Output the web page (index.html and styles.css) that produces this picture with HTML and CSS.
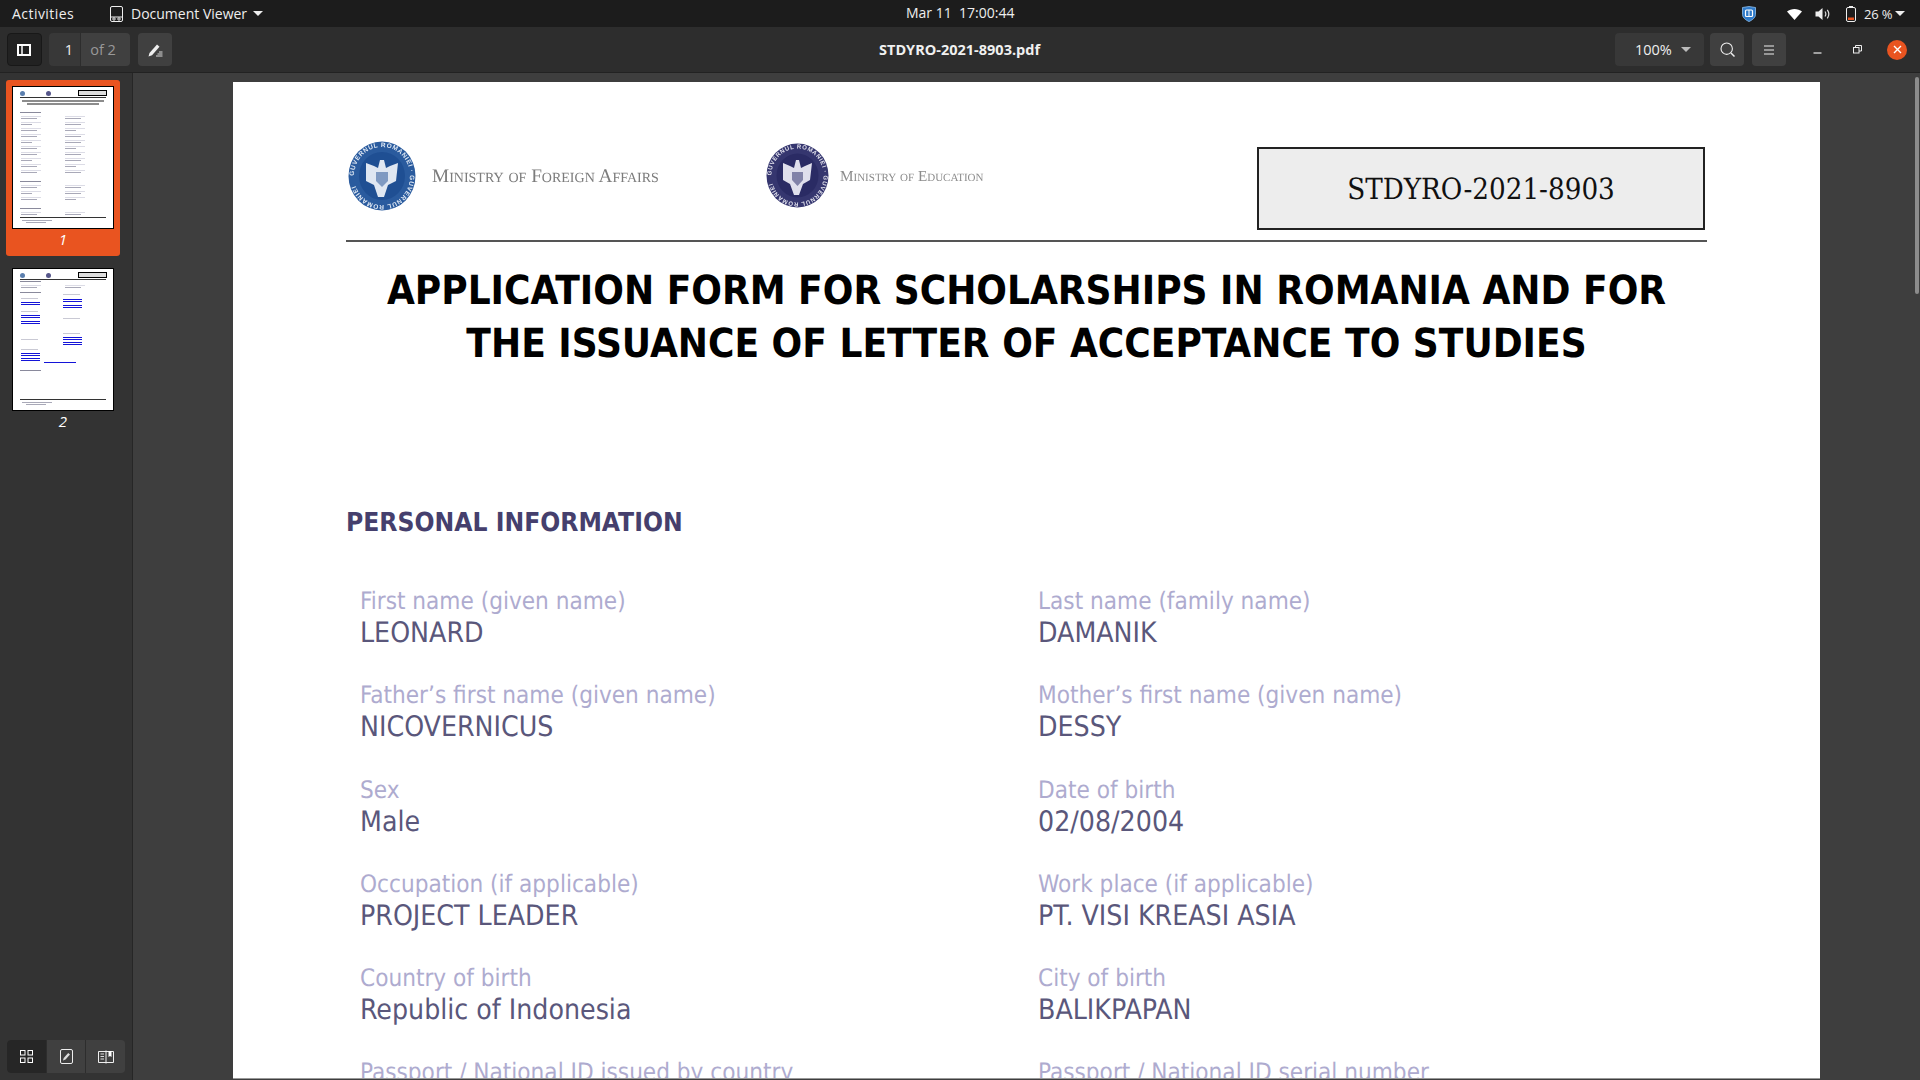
FILE: index.html
```html
<!DOCTYPE html>
<html lang="en">
<head>
    <meta charset="UTF-8">
    <title>STDYRO-2021-8903.pdf</title>
    <link rel="stylesheet" href="styles.css">
</head>
<body>

    <!-- Top Bar -->
    <header class="topbar">
        <div class="topbar-left">
            <span class="activities">Activities</span>
            <span class="app-menu">
                <svg class="app-icon" width="13" height="16" viewBox="0 0 13 16" fill="none" stroke="#eee" stroke-width="1"><rect x="0.500" y="0.500" width="12" height="15" rx="1.500"/><path d="M0.500 11h12"/><circle cx="4" cy="13" r="1.200"/><circle cx="9" cy="13" r="1.200"/></svg>
                <span>Document Viewer</span>
                <span class="caret"></span>
            </span>
        </div>
        <div class="clock">Mar 11&nbsp; 17:00:44</div>
        <div class="topbar-right">
            <svg class="tray-shield" width="14" height="16" viewBox="0 0 14 16"><path d="M0.500 1.500L7 0.500l6.500 1v7c0 3-3 5.500-6.500 7-3.500-1.500-6.500-4-6.500-7z" fill="#2f7ac9" stroke="#8fc0ee" stroke-width="0.800"/><rect x="3.500" y="4" width="7" height="6.500" rx="1" fill="none" stroke="#fff" stroke-width="1.200"/><path d="M7 4v6.500" stroke="#fff" stroke-width="1"/></svg>
            <svg class="tray-wifi" width="15" height="12" viewBox="0 0 15 12"><path d="M0 3.500C4 0 11 0 15 3.500L7.500 12z" fill="#fff"/></svg>
            <svg class="tray-sound" width="15" height="14" viewBox="0 0 15 14"><path d="M0.500 4.500h3L7.500 1v12L3.500 9.500h-3z" fill="#eee"/><path d="M10 4.500c1 1.500 1 3.500 0 5M12.300 2.800c1.800 2.500 1.800 6 0 8.500" fill="none" stroke="#ddd" stroke-width="1.200"/></svg>
            <svg class="tray-battery" width="10" height="16" viewBox="0 0 10 16"><rect x="0.500" y="1.500" width="9" height="14" rx="1.500" fill="none" stroke="#eee"/><rect x="3" y="0" width="4" height="2" fill="#eee"/><rect x="2" y="11.500" width="6" height="2.500" fill="#e95420"/></svg>
            <span class="battery-text">26 %</span>
            <span class="caret"></span>
        </div>
    </header>

    <!-- Header Bar -->
    <div class="headerbar">
        <div class="hb-left">
            <button class="hb-btn is-dark">
                <svg width="14" height="12" viewBox="0 0 14 12" fill="none" stroke="#fff" stroke-width="2"><rect x="1" y="1" width="12" height="10"/><path d="M5 1v10" stroke-width="1.500"/></svg>
            </button>
            <div class="page-entry">
                <span class="page-num">1</span>
                <span class="page-of">of 2</span>
            </div>
            <button class="hb-btn">
                <svg width="15" height="14" viewBox="0 0 15 14"><path d="M0.500 13.500l1-3.500 7.500-8.500 2.500 2.200-7.500 8.500z" fill="#eee"/><path d="M8 13h6.500M9.500 11h5M11 9h3.500" stroke="#eee" stroke-width="0.900"/></svg>
            </button>
        </div>
        <div class="doc-title">STDYRO-2021-8903.pdf</div>
        <div class="hb-right">
            <div class="zoom-select">100% <span class="caret caret-dim"></span></div>
            <button class="hb-btn">
                <svg width="15" height="15" viewBox="0 0 15 15" fill="none" stroke="#eee" stroke-width="1.100"><circle cx="6.700" cy="6.700" r="5.700"/><path d="M11 11l3.500 3.500" stroke-width="1.500"/></svg>
            </button>
            <button class="hb-btn">
                <svg width="12" height="10" viewBox="0 0 12 10" stroke="#eee" stroke-width="1"><path d="M1 1h10M1 5h10M1 9h10"/></svg>
            </button>
            <div class="window-btns">
                <span class="win-btn"><svg width="9" height="9" viewBox="0 0 9 9" stroke="#eee" stroke-width="1.200"><path d="M0.500 8h8"/></svg></span>
                <span class="win-btn"><svg width="9" height="9" viewBox="0 0 9 9" fill="none" stroke="#eee" stroke-width="1"><rect x="0.500" y="2.500" width="5.500" height="5.500"/><path d="M2.500 2.500v-2h6v5.500h-2.500"/></svg></span>
                <span class="win-close"><svg width="9" height="9" viewBox="0 0 9 9" stroke="#fff" stroke-width="1.400"><path d="M1 1l7 7M8 1l-7 7"/></svg></span>
            </div>
        </div>
    </div>

    <div class="main">

        <!-- Sidebar -->
        <aside class="sidebar">
            <div class="thumbs">
                <div class="thumb is-selected">
                    <div class="thumb-page">
                        <div class="mini-head"><i class="mini-seal"></i><i class="mini-seal seal-2"></i><i class="mini-box"></i></div>
                        <i class="mini-rule"></i>
                        <i class="mini-title"></i>
                        <i class="mini-title short"></i>
                        <i class="mini-heading"></i>
                        <div class="mini-rows">
                            <div class="mini-cell"><i></i><i></i></div><div class="mini-cell"><i></i><i></i></div>
                            <div class="mini-cell"><i></i><i></i></div><div class="mini-cell"><i></i><i></i></div>
                            <div class="mini-cell"><i></i><i></i></div><div class="mini-cell"><i></i><i></i></div>
                            <div class="mini-cell"><i></i><i></i></div><div class="mini-cell"><i></i><i></i></div>
                            <div class="mini-cell"><i></i><i></i></div><div class="mini-cell"><i></i><i></i></div>
                            <div class="mini-cell"><i></i><i></i></div><div class="mini-cell"><i></i><i></i></div>
                            <div class="mini-cell"><i></i><i></i></div><div class="mini-cell"><i></i><i></i></div>
                            <div class="mini-cell"><i></i><i></i></div><div class="mini-cell"><i></i><i></i></div>
                            <div class="mini-cell"><i></i><i></i></div><div class="mini-cell"><i></i><i></i></div>
                            <div class="mini-cell"><i></i><i></i></div><div class="mini-cell"><i></i><i></i></div>
                        </div>
                        <i class="mini-heading"></i>
                        <div class="mini-rows">
                            <div class="mini-cell"><i></i><i></i></div><div class="mini-cell"><i></i><i></i></div>
                            <div class="mini-cell"><i></i><i></i></div><div class="mini-cell"><i></i><i></i></div>
                            <div class="mini-cell"><i></i><i></i></div><div class="mini-cell"><i></i><i></i></div>
                        </div>
                        <i class="mini-heading"></i>
                        <div class="mini-rows">
                            <div class="mini-cell"><i></i><i></i></div><div class="mini-cell"><i></i><i></i></div>
                        </div>
                        <i class="mini-foot"></i>
                        <i class="mini-footline"></i>
                        <i class="mini-footline short"></i>
                    </div>
                    <span class="thumb-label">1</span>
                </div>
                <div class="thumb">
                    <div class="thumb-page">
                        <div class="mini-head"><i class="mini-seal"></i><i class="mini-seal seal-2"></i><i class="mini-box"></i></div>
                        <i class="mini-rule"></i>
                        <i class="mini-heading tight"></i>
                        <div class="mini-rows">
                            <div class="mini-cell"><i></i><i></i></div><div class="mini-cell"><i></i><i></i></div>
                        </div>
                        <i class="mini-heading short-gap"></i>
                        <div class="mini-cols">
                            <div class="mini-col">
                                <i class="g top-5"></i>
                                <i class="b top-3"></i><i class="b"></i>
                                <i class="g top-6"></i>
                                <i class="b top-3"></i><i class="b"></i>
                                <i class="b top-3"></i><i class="b"></i>
                                <i class="g top-15"></i>
                                <i class="g top-9"></i>
                                <i class="b top-3"></i><i class="b"></i>
                                <i class="b top-2"></i><i class="b"></i>
                            </div>
                            <div class="mini-col">
                                <i class="g top-1"></i>
                                <i class="b top-4"></i><i class="b"></i>
                                <i class="b top-3"></i><i class="b"></i>
                                <i class="g top-10"></i>
                                <i class="g top-14"></i>
                                <i class="b top-3"></i><i class="b"></i>
                                <i class="b top-2"></i><i class="b"></i>
                            </div>
                        </div>
                        <i class="mini-center"></i>
                        <i class="mini-heading"></i>
                        <i class="mini-foot"></i>
                        <i class="mini-footline"></i>
                        <i class="mini-footline short"></i>
                    </div>
                    <span class="thumb-label">2</span>
                </div>
            </div>
            <div class="side-tabs">
                <span class="side-tab is-active">
                    <svg width="13" height="13" viewBox="0 0 13 13" fill="none" stroke="#fff"><rect x="0.500" y="0.500" width="4.500" height="4.500"/><rect x="8" y="0.500" width="4.500" height="4.500"/><rect x="0.500" y="8" width="4.500" height="4.500"/><rect x="8" y="8" width="4.500" height="4.500"/></svg>
                </span>
                <span class="side-tab">
                    <svg width="13" height="15" viewBox="0 0 13 15"><rect x="0.500" y="0.500" width="12" height="14" rx="1.500" fill="none" stroke="#eee"/><path d="M3 11.500l0.700-2.500 4.500-5 1.800 1.600-4.500 5z" fill="#ddd"/></svg>
                </span>
                <span class="side-tab">
                    <svg width="16" height="14" viewBox="0 0 16 14" fill="none" stroke="#eee"><path d="M0.500 1.500h15v11h-15zM8 0.500v13"/><path d="M2.500 4h3.500M2.500 6.500h3.500M2.500 9h3.500" stroke-width="0.900"/><path d="M10.500 1h3v6l-1.500-1-1.500 1z" fill="#fff" stroke="none"/></svg>
                </span>
            </div>
        </aside>

        <!-- Document -->
        <main class="viewer">
            <article class="page">
                <div class="doc-head">
                    <div class="logo logo-foreign">
                        <svg class="seal" width="68" height="70" viewBox="0 0 68 70">
                            <defs><path id="ringA" d="M6 35a28 29 0 1 1 56 0a28 29 0 1 1-56 0"/></defs>
                            <ellipse cx="34" cy="35" rx="33.500" ry="34.500" fill="#2a5b9e"/>
                            <ellipse cx="34" cy="35" rx="23" ry="24" fill="#1f4f93"/>
                            <text class="seal-text" fill="#dfe8f4"><textPath href="#ringA">GUVERNUL ROMANIEI · GUVERNUL ROMANIEI</textPath></text>
                            <path d="M18 22l8 3 4 2 2-8h4l2 8 4-2 8-3-2 18-8 4-4 12h-6l-4-12-8-4z" fill="#dfe7f2"/>
                            <path d="M28 31h12v9l-6 6-6-6z" fill="#7f9ac2"/>
                        </svg>
                        <span class="logo-text">Ministry of Foreign Affairs</span>
                    </div>
                    <div class="logo logo-edu">
                        <svg class="seal" width="63" height="65" viewBox="0 0 63 65">
                            <defs><path id="ringB" d="M5.500 32.500a26 27 0 1 1 52 0a26 27 0 1 1-52 0"/></defs>
                            <ellipse cx="31.500" cy="32.500" rx="31" ry="32" fill="#35366f"/>
                            <ellipse cx="31.500" cy="32.500" rx="21" ry="22" fill="#2a2b64"/>
                            <text class="seal-text edu" fill="#e0e0ec"><textPath href="#ringB">GUVERNUL ROMANIEI · GUVERNUL ROMANIEI</textPath></text>
                            <path d="M17 20l7 3 4 2 2-8h3l2 8 4-2 7-3-2 17-7 4-4 11h-5l-4-11-7-4z" fill="#dfdfec"/>
                            <path d="M26 29h11v8l-5.500 6-5.500-6z" fill="#8182a8"/>
                        </svg>
                        <span class="logo-text">Ministry of Education</span>
                    </div>
                    <div class="ref-box">STDYRO-2021-8903</div>
                </div>

                <h1 class="doc-h1">APPLICATION FORM FOR SCHOLARSHIPS IN ROMANIA AND FOR THE ISSUANCE OF LETTER OF ACCEPTANCE TO STUDIES</h1>

                <h2 class="doc-h2">PERSONAL INFORMATION</h2>

                <div class="fields">
                    <div class="field"><div class="f-label">First name (given name)</div><div class="f-value">LEONARD</div></div>
                    <div class="field"><div class="f-label">Last name (family name)</div><div class="f-value">DAMANIK</div></div>
                    <div class="field"><div class="f-label">Father’s first name (given name)</div><div class="f-value">NICOVERNICUS</div></div>
                    <div class="field"><div class="f-label">Mother’s first name (given name)</div><div class="f-value">DESSY</div></div>
                    <div class="field"><div class="f-label">Sex</div><div class="f-value">Male</div></div>
                    <div class="field"><div class="f-label">Date of birth</div><div class="f-value">02/08/2004</div></div>
                    <div class="field"><div class="f-label">Occupation (if applicable)</div><div class="f-value">PROJECT LEADER</div></div>
                    <div class="field"><div class="f-label">Work place (if applicable)</div><div class="f-value">PT. VISI KREASI ASIA</div></div>
                    <div class="field"><div class="f-label">Country of birth</div><div class="f-value">Republic of Indonesia</div></div>
                    <div class="field"><div class="f-label">City of birth</div><div class="f-value">BALIKPAPAN</div></div>
                    <div class="field"><div class="f-label">Passport / National ID issued by country</div></div>
                    <div class="field"><div class="f-label">Passport / National ID serial number</div></div>
                </div>
            </article>
            <div class="scroll-thumb"></div>
        </main>
    </div>

</body>
</html>
```

FILE: styles.css
```css
/* General */
* {
    box-sizing: border-box;
}

html, body {
    margin: 0;
    height: 1080px;
    overflow: hidden;
}

body {
    font-family: "Open Sans", "DejaVu Sans", sans-serif;
    background: #2d2d2d;
    color: #eee;
    display: flex;
    flex-direction: column;
}

button {
    border: 0;
    padding: 0;
    font: inherit;
}

svg {
    display: block;
    flex: none;
}

.caret {
    display: inline-block;
    width: 0;
    height: 0;
    border-left: 5px solid transparent;
    border-right: 5px solid transparent;
    border-top: 5px solid #eee;
}

.caret-dim {
    border-top-color: #bbb;
}

/* Top Bar */
.topbar {
    height: 27px;
    background: #1c1c1c;
    display: flex;
    align-items: center;
    justify-content: space-between;
    padding: 0 12px;
    font-size: 14px;
    position: relative;
}

.topbar-left {
    display: flex;
    align-items: center;
}

.activities {
    width: 63px;
    margin-right: 35px;
    letter-spacing: 0.45px;
}

.app-menu {
    display: flex;
    align-items: center;
}

.app-icon { margin-right: 8px; }
.app-menu .caret { margin-left: 6px; }

.clock {
    position: absolute;
    left: 906px;
    top: 3px;
}

.topbar-right {
    display: flex;
    align-items: center;
    margin-right: 3px;
}

.tray-shield { margin-right: 31px; }
.tray-wifi { margin-right: 13px; }
.tray-sound { margin-right: 16px; }
.tray-battery { margin-right: 8px; }
.battery-text { width: 26px; margin-right: 5px; font-size: 13px; letter-spacing: -0.2px; white-space: nowrap; }

/* Header Bar */
.headerbar {
    height: 46px;
    background: #2d2d2d;
    border-bottom: 1px solid #222;
    display: flex;
    align-items: center;
    justify-content: space-between;
    padding: 0 13px 0 7px;
    position: relative;
}

.hb-left, .hb-right {
    display: flex;
    align-items: center;
}

.hb-btn {
    width: 34px;
    height: 33px;
    background: #404040;
    border-radius: 4px;
    display: flex;
    align-items: center;
    justify-content: center;
}

.hb-btn.is-dark {
    background: #222;
    border: 1px solid #181818;
    width: 35px;
    padding-right: 2px;
}

.page-entry {
    display: flex;
    width: 81px;
    height: 33px;
    margin: 0 8px 0 7px;
    border-radius: 4px;
    overflow: hidden;
    font-size: 14.5px;
    line-height: 33px;
    text-align: center;
}

.page-num {
    width: 32px;
    padding-left: 9px;
    background: #383838;
    border-right: 1px solid #2d2d2d;
}

.page-of {
    width: 49px;
    padding-right: 5px;
    background: #404040;
    color: #999;
}

.doc-title {
    position: absolute;
    left: 879px;
    top: 13px;
    font-size: 14.5px;
    font-weight: 700;
    color: #f0f0f0;
}

.zoom-select {
    width: 89px;
    height: 33px;
    margin-right: 6px;
    background: #383838;
    border-radius: 4px;
    font-size: 14.5px;
    line-height: 33px;
    padding-left: 20px;
    display: flex;
    align-items: center;
    gap: 9px;
}

.hb-right .hb-btn {
    margin-right: 8px;
}

.window-btns {
    display: flex;
    align-items: center;
    margin-left: 14px;
    gap: 22px;
}

.win-btn {
    width: 18px;
    display: flex;
    justify-content: center;
}

.win-close {
    width: 20px;
    height: 20px;
    margin-left: -1px;
    border-radius: 50%;
    background: #e95420;
    display: flex;
    align-items: center;
    justify-content: center;
}

/* Main Area */
.main {
    flex: 1;
    display: flex;
    min-height: 0;
}

.sidebar {
    width: 133px;
    background: #333;
    border-right: 1px solid #262626;
    display: flex;
    flex-direction: column;
    justify-content: space-between;
    padding: 7px 7px 7px 6px;
}

.thumbs {
    display: flex;
    flex-direction: column;
    gap: 6px;
}

/* Thumbnails */
.thumb {
    width: 114px;
    height: 176px;
    padding: 6px 0 0 6px;
    border-radius: 3px;
    color: #fff;
}

.thumb.is-selected {
    background: #e95420;
}

.thumb-label {
    display: block;
    width: 102px;
    text-align: center;
    font-size: 15px;
    font-style: italic;
}

.thumb-page {
    width: 102px;
    height: 143px;
    background: #fff;
    border: 1px solid #000;
    padding: 3px 7px;
    display: flex;
    flex-direction: column;
    overflow: hidden;
}

.thumb-page i {
    display: block;
    flex: none;
}

.mini-head {
    display: flex;
    align-items: center;
    height: 6px;
}

.mini-seal {
    width: 5px;
    height: 5px;
    border-radius: 50%;
    background: #5b7fae;
}

.mini-seal.seal-2 {
    margin-left: 21px;
    background: #55568a;
}

.mini-box {
    width: 29px;
    height: 6px;
    border: 1px solid #000;
    background: #ddd;
    margin-left: auto;
    margin-right: -1px;
}

.mini-rule {
    height: 1px;
    background: #333;
    margin-top: 1px;
}

.mini-title {
    height: 2px;
    background: #8c8c8c;
    margin: 2px 2px 0;
}

.mini-title.short {
    margin: 1px 7px 0;
}

.mini-heading {
    width: 21px;
    height: 1px;
    background: #8a8a9c;
    margin-top: 7px;
}

.mini-heading.tight {
    margin-top: 1px;
}

.mini-heading.short-gap {
    margin-top: 3px;
}

.mini-rows {
    display: grid;
    grid-template-columns: 44px 1fr;
    row-gap: 2px;
    margin-top: 3px;
    padding-left: 1px;
}

.mini-cell {
    display: flex;
    flex-direction: column;
    gap: 1px;
    min-height: 4px;
}

.mini-cell i {
    width: 20px;
    height: 1px;
    background: #dcdce6;
}

.mini-cell i + i {
    width: 16px;
    background: #a9a9b8;
}

.mini-cell:nth-child(3n) i + i {
    width: 11px;
}

/* Second page, the link columns */
.mini-cols {
    display: grid;
    grid-template-columns: 42px 1fr;
    padding-left: 1px;
}

.mini-col .g {
    width: 17px;
    height: 1px;
    background: #c9c9d4;
}

.mini-col .b {
    width: 19px;
    height: 1px;
    margin-top: 1px;
    background: #1414d8;
}

.mini-col .top-1 { margin-top: 1px; }
.mini-col .top-2 { margin-top: 2px; }
.mini-col .top-3 { margin-top: 3px; }
.mini-col .top-4 { margin-top: 4px; }
.mini-col .top-5 { margin-top: 5px; }
.mini-col .top-6 { margin-top: 6px; }
.mini-col .top-9 { margin-top: 9px; }
.mini-col .top-10 { margin-top: 10px; }
.mini-col .top-14 { margin-top: 14px; }
.mini-col .top-15 { margin-top: 15px; }

.mini-center {
    width: 32px;
    height: 1px;
    background: #1414d8;
    margin: 1px 0 0 24px;
}

.mini-foot {
    height: 1px;
    background: #333;
    margin-top: auto;
    margin-bottom: 1px;
}

.mini-footline {
    width: 30px;
    height: 1px;
    margin: 1px 0 0 2px;
    background: #a9a9b8;
}

.mini-footline.short {
    width: 20px;
    margin-left: 6px;
    margin-bottom: 2px;
}

.side-tabs {
    display: flex;
    width: 118px;
    height: 33px;
    margin-left: 1px;
    border-radius: 4px;
    background: #404040;
    overflow: hidden;
}

.side-tab {
    flex: 1;
    display: flex;
    align-items: center;
    justify-content: center;
    border-right: 1px solid #2d2d2d;
}

.side-tab:last-child {
    border-right: 0;
}

.side-tab.is-active {
    background: #262626;
}

/* Document */
.viewer {
    flex: 1;
    background: #3e3e3e;
    padding-top: 9px;
    padding-left: 100px;
    position: relative;
    overflow: hidden;
}

.scroll-thumb {
    position: absolute;
    right: 1px;
    top: 4px;
    width: 4px;
    height: 217px;
    background: #8c8c8c;
    border-radius: 2px;
}

.page {
    width: 1587px;
    height: 997px;
    background: #fff;
    border-bottom: 1px solid #999;
    padding: 59px 113px 0;
    overflow: hidden;
    text-rendering: geometricPrecision;
}

.doc-head {
    display: flex;
    align-items: flex-start;
    height: 101px;
    border-bottom: 2px solid #555;
}

.logo {
    display: flex;
    align-items: center;
}

.logo-foreign {
    width: 420px;
    padding-left: 2px;
}

.logo-edu {
    width: 491px;
    margin-top: 2px;
}

.logo .seal {
    margin-right: 16px;
    filter: blur(0.6px);
}

.logo-edu .seal {
    margin-right: 11px;
}

.seal-text {
    font-family: "Liberation Sans", sans-serif;
    font-size: 6.500px;
    font-weight: 700;
    letter-spacing: 0.6px;
}

.seal-text.edu {
    font-size: 6px;
}

.logo-text {
    font-family: "Liberation Serif", serif;
    font-variant: small-caps;
    color: #7c7c7c;
    font-size: 19.300px;
    margin-top: 2px;
    filter: blur(0.5px);
}

.logo-edu .logo-text {
    font-size: 15.200px;
    color: #8c8c8c;
}

.ref-box {
    width: 448px;
    height: 83px;
    margin-top: 6px;
    border: 2px solid #222;
    background: #ededed;
    color: #111;
    font-family: "DejaVu Serif Condensed", "DejaVu Serif", serif;
    font-stretch: condensed;
    font-size: 29.200px;
    display: flex;
    align-items: center;
    justify-content: center;
}

.doc-h1 {
    font-family: "DejaVu Sans Condensed", "DejaVu Sans", sans-serif;
    font-stretch: condensed;
    font-size: 40.100px;
    line-height: 53px;
    font-weight: 700;
    color: #000;
    text-align: center;
    margin: 23px 0 0;
    padding: 0 20px;
}

.doc-h2 {
    font-family: "DejaVu Sans Condensed", "DejaVu Sans", sans-serif;
    font-stretch: condensed;
    font-size: 26.200px;
    line-height: 30px;
    font-weight: 700;
    color: #453f6d;
    margin: 137px 0 0;
}

.fields {
    display: grid;
    grid-template-columns: 678px 1fr;
    padding: 48px 14px 0;
    row-gap: 31.300px;
    font-family: "DejaVu Sans Condensed", "DejaVu Sans", sans-serif;
    font-stretch: condensed;
}

.f-label {
    font-size: 24.100px;
    line-height: 30px;
    color: #aeabcf;
}

.f-value {
    font-size: 28.200px;
    line-height: 33px;
    color: #5a577b;
}
```
